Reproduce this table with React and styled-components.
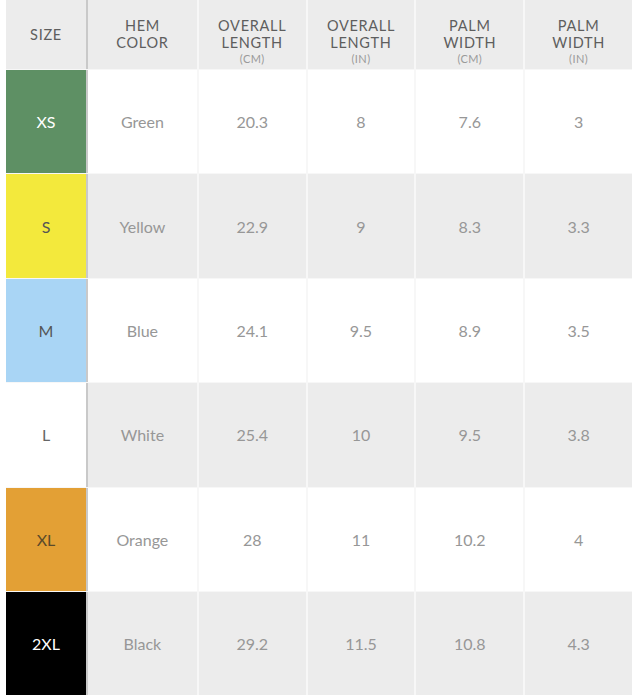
import React from 'react';
import styled, { createGlobalStyle } from 'styled-components';

const GlobalStyle = createGlobalStyle`
  body {
    margin: 0;
    background: #fff;
    font-family: Lato, "Open Sans", sans-serif;
  }
`

const Wrapper = styled.div`
  padding-left: 6px;
  width: 626px;
`

const Table = styled.div`
  display: flex;
  flex-direction: column;
  gap: 1px;
  background: #f7f7f7;
`

const Row = styled.div`
  display: grid;
  grid-template-columns: 82px repeat(5, 1fr);
  height: ${p => p.$height}px;
  background: ${p => p.$bg};
`

const Cell = styled.div`
  display: flex;
  flex-direction: column;
  align-items: center;
  justify-content: ${p => (p.$top ? 'flex-start' : 'center')};
  padding-top: ${p => p.$top || 0}px;
  text-align: center;
  & + & {
    border-left: 2px solid #f7f7f7;
  }
`

const SizeCell = styled(Cell)`
  background: ${p => p.$bg};
  color: ${p => p.$fg};
  border-right: 2px solid #c9c9c9;
  font-size: 16px;
  & + ${Cell} {
    border-left: none;
  }
`

const HeadText = styled.div`
  color: #5e5e5e;
  font-size: 14.5px;
  line-height: 17.4px;
  letter-spacing: 0.7px;
  text-transform: uppercase;
`

const Unit = styled.div`
  color: #9a9a9a;
  font-size: 11px;
  line-height: 13.2px;
  letter-spacing: 0.4px;
`

const Value = styled.span`
  color: #979797;
  font-size: 16px;
`

const headers = [
  { lines: ['Hem', 'Color'] },
  { lines: ['Overall', 'Length'], unit: '(CM)' },
  { lines: ['Overall', 'Length'], unit: '(IN)' },
  { lines: ['Palm', 'Width'], unit: '(CM)' },
  { lines: ['Palm', 'Width'], unit: '(IN)' },
]

const rows = [
  { size: 'XS', bg: '#5e9064', fg: '#fff', values: ['Green', '20.3', '8', '7.6', '3'] },
  { size: 'S', bg: '#f3e93c', fg: '#555', values: ['Yellow', '22.9', '9', '8.3', '3.3'] },
  { size: 'M', bg: '#a9d5f5', fg: '#555', values: ['Blue', '24.1', '9.5', '8.9', '3.5'] },
  { size: 'L', bg: '#fff', fg: '#666', values: ['White', '25.4', '10', '9.5', '3.8'] },
  { size: 'XL', bg: '#e3a035', fg: '#5a4a2a', values: ['Orange', '28', '11', '10.2', '4'] },
  { size: '2XL', bg: '#000', fg: '#fff', values: ['Black', '29.2', '11.5', '10.8', '4.3'] },
]

const App = () => {
  return (
    <Wrapper>
      <GlobalStyle />
      <Table>
        <Row $height={69} $bg="#ececec">
          <SizeCell $bg="#ececec" $fg="#666">
            <HeadText>Size</HeadText>
          </SizeCell>
          {headers.map((h, i) => (
            <Cell key={i} $top={17}>
              <HeadText>
                {h.lines[0]}<br />{h.lines[1]}
              </HeadText>
              {h.unit && <Unit>{h.unit}</Unit>}
            </Cell>
          ))}
        </Row>
        {rows.map((r, i) => (
          <Row key={r.size} $height={103.4} $bg={i % 2 === 0 ? '#fff' : '#ececec'}>
            <SizeCell $bg={r.bg} $fg={r.fg}>{r.size}</SizeCell>
            {r.values.map((v, j) => (
              <Cell key={j}><Value>{v}</Value></Cell>
            ))}
          </Row>
        ))}
      </Table>
    </Wrapper>
  )
}

export default App;
